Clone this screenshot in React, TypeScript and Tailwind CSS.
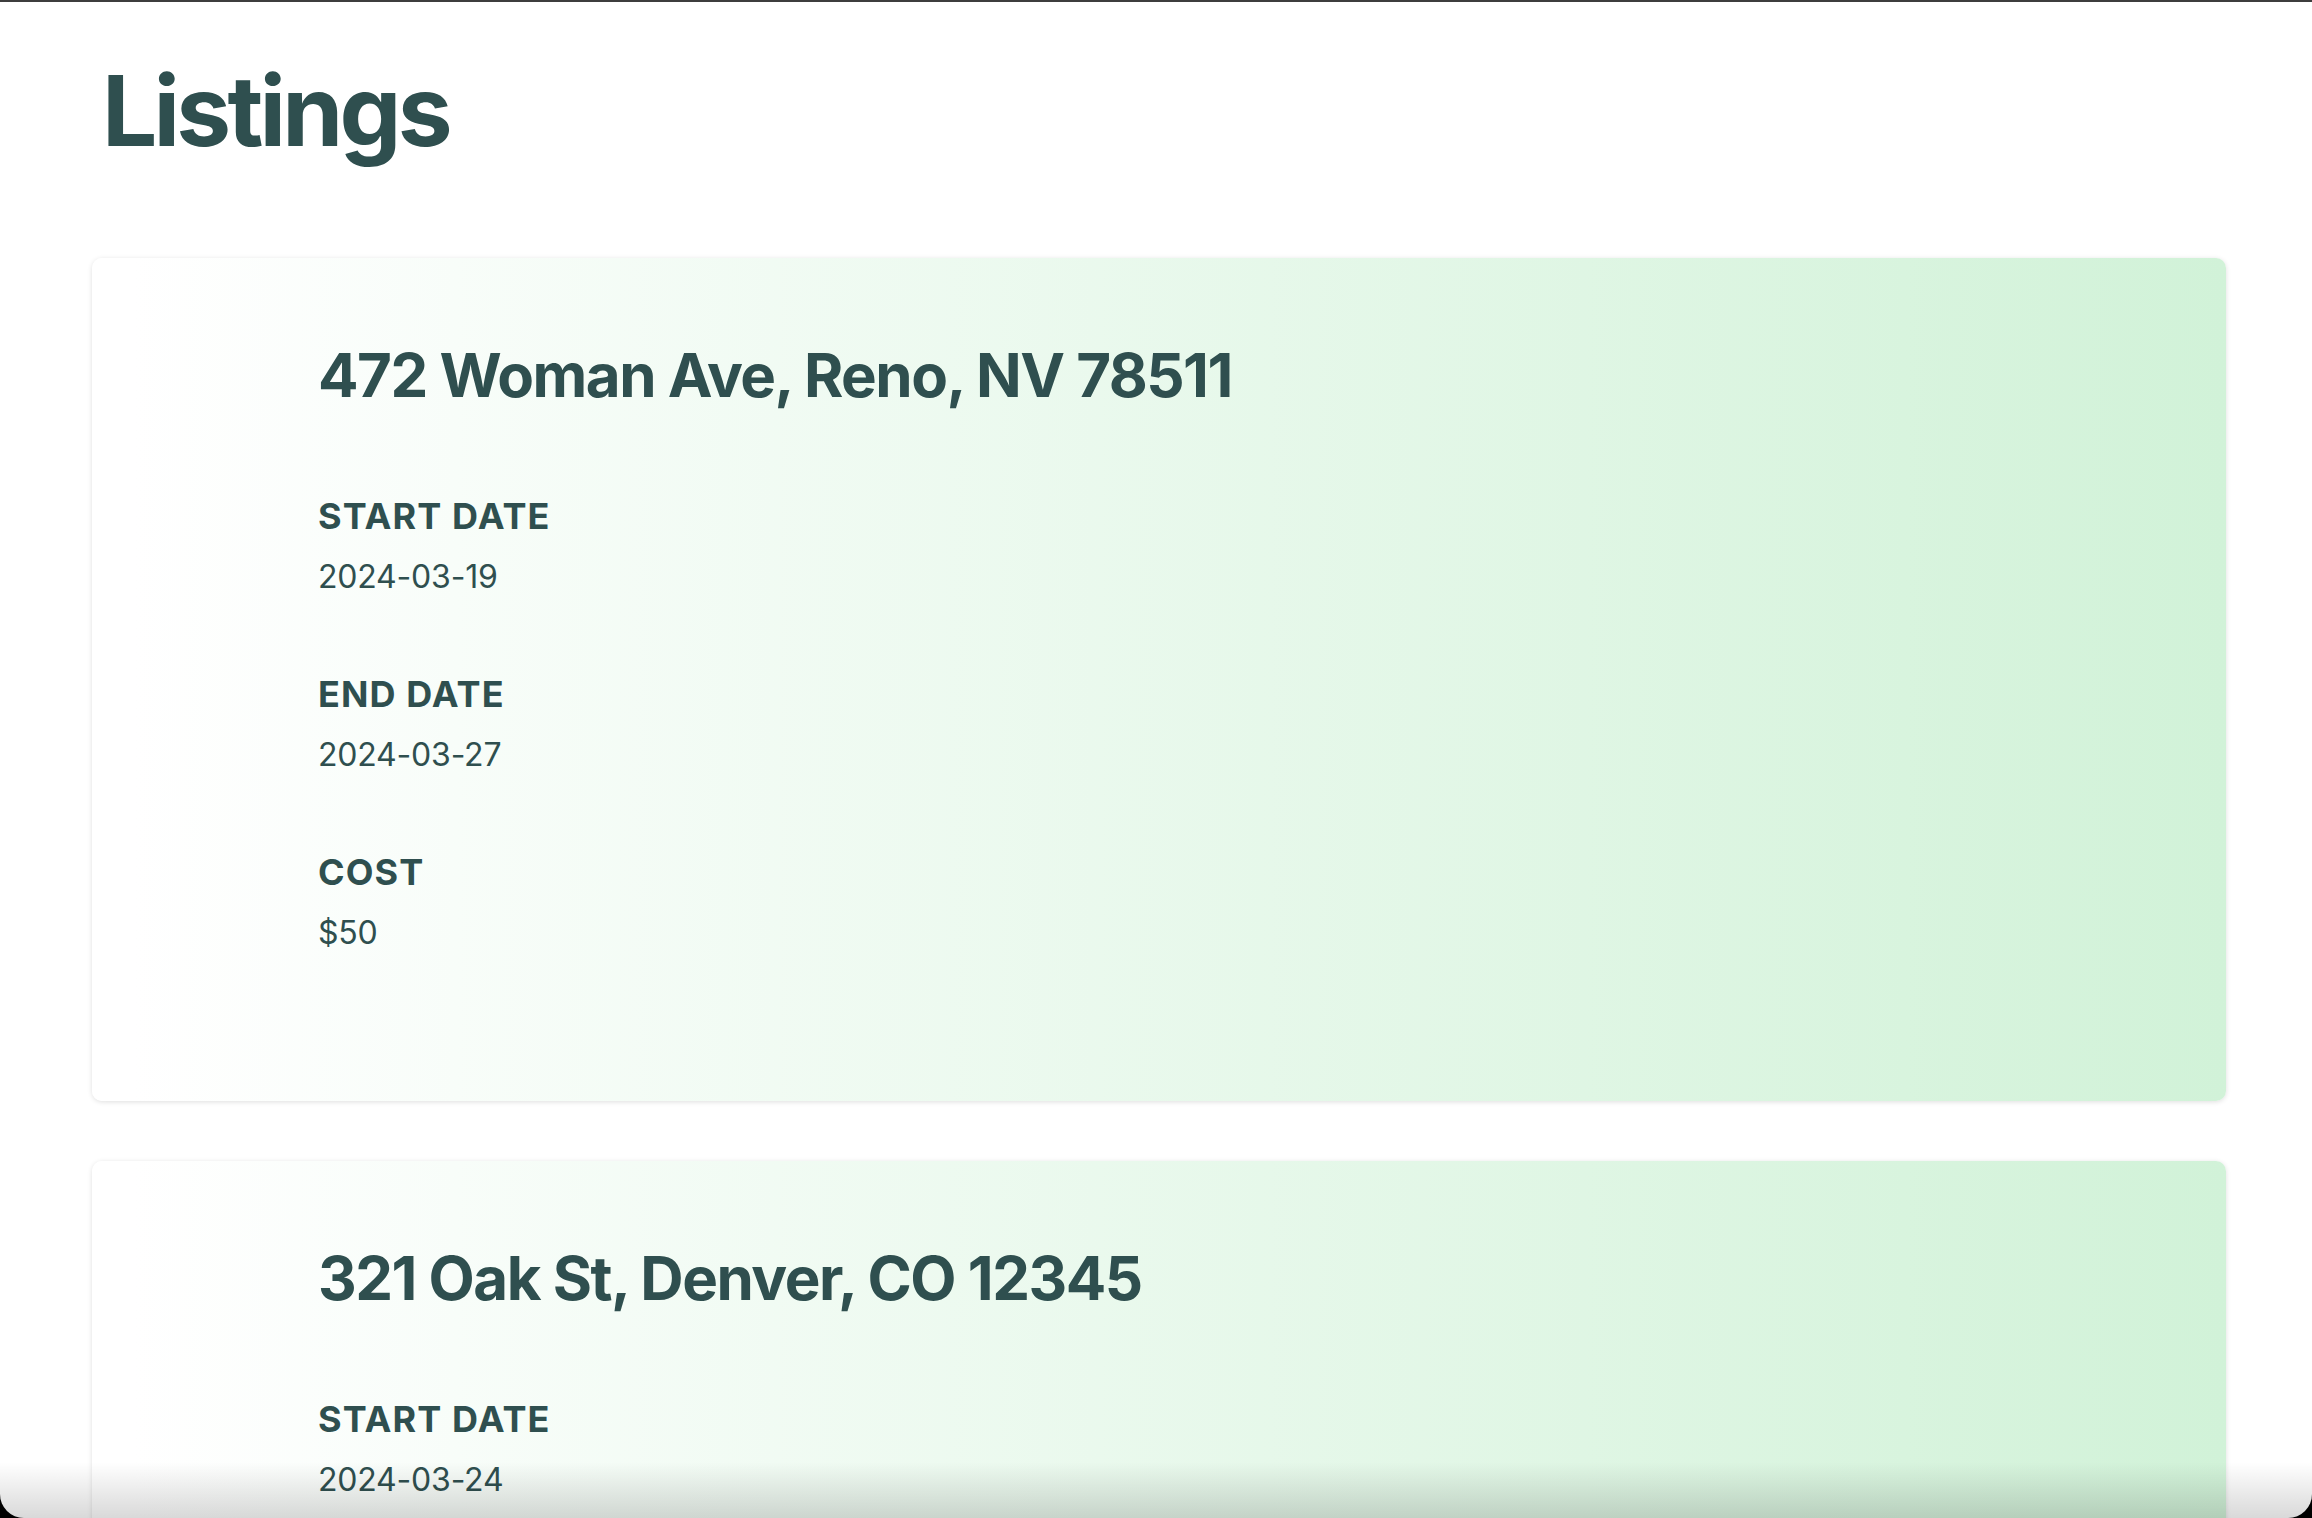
import React from "react";

type Listing = {
  address: string;
  start: string;
  end: string;
  cost: string;
};

const listings: Listing[] = [
  { address: "472 Woman Ave, Reno, NV 78511", start: "2024-03-19", end: "2024-03-27", cost: "$50" },
  { address: "321 Oak St, Denver, CO 12345", start: "2024-03-24", end: "2024-03-30", cost: "$75" },
];

function Field({ label, value, last }: { label: string; value: string; last?: boolean }) {
  return (
    <div className={last ? "" : "mb-[77px]"}>
      <div className="text-[36px] leading-[40px] font-bold uppercase tracking-[1.1px]">{label}</div>
      <div className="mt-[21px] text-[32px] leading-[40px] font-normal tracking-[-0.2px]">{value}</div>
    </div>
  );
}

function Card({ item }: { item: Listing }) {
  return (
    <div className="rounded-[10px] bg-[linear-gradient(to_right,#ffffff_2%,#d1f2d8_100%)] shadow-[0_1px_5px_rgba(0,0,0,0.13)] pt-[81px] pb-[148px] pl-[226px] pr-10">
      <h2 className="text-[60px] leading-[72px] font-bold tracking-[-1.5px] mb-[85px]">{item.address}</h2>
      <Field label="Start Date" value={item.start} />
      <Field label="End Date" value={item.end} />
      <Field label="Cost" value={item.cost} last />
    </div>
  );
}

export default function App() {
  return (
    <div className="bg-black">
      <div
        className="relative h-[1518px] overflow-hidden bg-white text-[#2f4f4f] border-t-2 border-[#3d3d3d] rounded-b-[24px]"
        style={{ fontFamily: "Inter, 'Noto Sans', 'Liberation Sans', sans-serif" }}
      >
        <div className="pl-[92px] pr-[86px] pt-[60px]">
          <h1 className="pl-[10px] text-[98px] leading-[98px] font-bold tracking-[-3.8px] mb-[98px]">Listings</h1>
          <div className="flex flex-col gap-[60px]">
            {listings.map((l) => (
              <Card key={l.address} item={l} />
            ))}
          </div>
        </div>
        <div className="pointer-events-none absolute inset-x-0 bottom-0 h-[56px] bg-gradient-to-b from-transparent to-black/15" />
      </div>
    </div>
  );
}
